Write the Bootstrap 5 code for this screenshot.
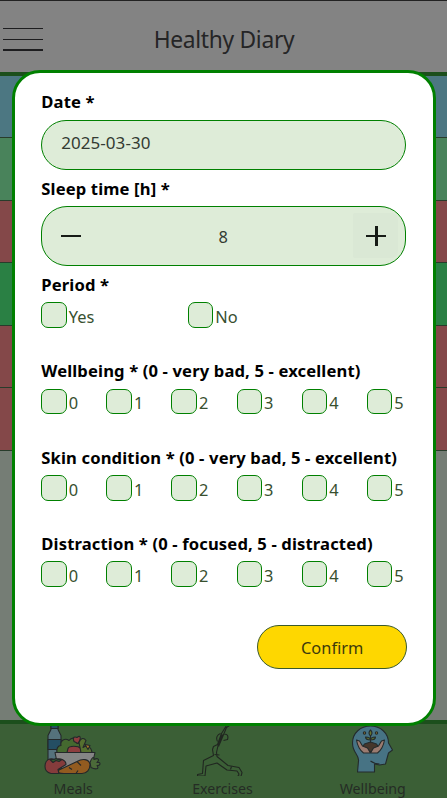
<!DOCTYPE html>
<html lang="en">
<head>
<meta charset="utf-8">
<meta name="viewport" content="width=device-width, initial-scale=1">
<title>Healthy Diary</title>
<link href="https://cdn.jsdelivr.net/npm/bootstrap@5.3.0/dist/css/bootstrap.min.css" rel="stylesheet">
<style>
body{font-family:"Noto Sans","Open Sans",sans-serif;font-size:16.4px;color:#3a4238;background:#757d75;height:798px}
.app{height:798px}
.topbar{height:76px;background:#838383;border-top:1px solid #222;border-bottom:4px solid #1c4f1c}
.burger{width:40px;height:24px;margin:25px 0 0 3px;position:absolute;left:0;top:1px}
.app-title{font-size:22.8px;color:#252526;line-height:1;letter-spacing:-.3px;padding:8px 0 0 1px}
.band{height:62.4px;border-bottom:1px solid #283c2b}
.band-blue{background:#4c7782;height:62px}.band-sage{background:#49835b;height:63px}
.band-red{background:#844849}.band-green{background:#2a8044}
.tabs{height:78px;background:#3b5f36;border-top:4px solid #1c4f1c;color:#252c25;font-size:14.2px}
.tab-item{width:149.5px;line-height:1;gap:5.5px}
.tab-item:first-child{width:147.5px}
.tab-item:nth-child(2){width:153px}
.dialog-layer{left:11.7px;top:69.8px;width:424.8px;height:656px;border:3px solid #008000;border-radius:28px;background:#fff;padding:10.6px 26.3px 0 26.6px}
.field-label{height:36.3px;font-weight:700;color:#000;white-space:nowrap;line-height:1;padding-top:2px;font-size:16.6px;letter-spacing:.14px}
.pill{background:#deecd8;border:1px solid #008000;border-radius:26px;color:#333b32;width:365px}
.date-box{height:50px;padding:0 19px 4px;font-size:17px;letter-spacing:.04px}
.step-box{height:60px;padding:0 7px 0 6px}
.step-box span{padding-top:2px}
.step-btn{width:45px;height:45px;border:0;background:transparent}
.step-btn.hovered{background:#dae8d5;border-radius:2px 7px 7px 2px}
.opt-row{height:25.5px;margin-bottom:24.6px}
.opt{width:65.1px;flex:none;gap:2px;line-height:1;color:#38502f}
.opt-wide .opt{width:146.4px}
.tick{width:25.5px;height:25.5px;border:1px solid #008000;border-radius:7px;background:#deecd8;flex:none}
.opt span{padding-top:6.7px}
.confirm{width:150px;height:43.5px;border:1px solid #3a5a2c;border-radius:22px;background:#fed700;color:#3d3a0c;font-size:16.4px;margin-top:13.9px;padding:2px 0 0}
</style>
<script src="https://cdn.jsdelivr.net/npm/bootstrap@5.3.0/dist/js/bootstrap.bundle.min.js"></script>
</head>
<body class="overflow-hidden">
<div class="app d-flex flex-column">
  <header class="topbar d-flex align-items-center justify-content-center position-relative flex-shrink-0">
    <svg class="burger" viewBox="0 0 40 24"><path d="M0 1.5h40M0 12.5h40" stroke="#1d1d1f"/><path d="M0 23h40" stroke="#1d1d1f" stroke-width="2"/></svg>
    <div class="app-title">Healthy Diary</div>
  </header>
  <main class="flex-grow-1">
    <div class="band band-blue"></div><div class="band band-sage"></div><div class="band band-red"></div>
    <div class="band band-green"></div><div class="band band-red"></div><div class="band band-red"></div>
  </main>
  <nav class="tabs d-flex flex-shrink-0">
    <div class="tab-item d-flex flex-column align-items-center">
      <svg width="58" height="52" viewBox="45 723.5 58 52" stroke="#24282a" stroke-width="1.1" stroke-linejoin="round">
        <path d="M52 724h7v5l3 6v27H49v-27l3-6z" fill="#55727c"/><path d="M49 739h13v10H49zM52 724h7v4h-7z" fill="#244e63"/>
        <path d="M58 753c-1-5 1-8 4-8-1-5 4-8 8-5 4-5 9-1 8 3 5-2 11 1 15 9z" fill="#44692f"/>
        <path d="M75 741c-2-5 1-5 3-4 3-3 5 0 1 6zM69 748c1-3 10-3 13 0v4H68z" fill="#8e3d3f"/>
        <path d="M80 742c2-5 5-5 7-2l-3 7c4-3 8-1 9 5H82z" fill="#56702f"/><path d="M86 744l5 1-2 4z" fill="#a9782a"/>
        <path d="M56 752h40c-1 8-5 14-9 18H65c-6-4-8-11-9-18z" fill="#858585"/>
        <path d="M91 762c2-6 4-6 4-3 4-2 6 0 3 3 4-1 4 3 0 3 3 4-2 4-6 2z" fill="#4b6a39"/>
        <path d="M91 764c-1-6-8-6-13-3l-19 9c-1 3 3 3 6 3h18c5 0 8-4 8-9z" fill="#925b20"/><path d="M70 767l3 2m5-8l4 4m-5 8l2-3" fill="none"/>
        <path d="M46 766c0-7 5-9 10-7 6-2 11 1 11 5l-8 5 1 4h-8c-4-1-6-4-6-7z" fill="#853c3c"/><path d="M51 759l4 0 2-1 2 1 4 0-3 2-3-1-3 2z" fill="#345d2d"/>
      </svg>
      <div>Meals</div>
    </div>
    <div class="tab-item d-flex flex-column align-items-center">
      <svg width="58" height="52" viewBox="194.5 724.5 58 52" fill="none" stroke="#202620" stroke-width="1.1" stroke-linejoin="round">
        <path d="M230 726l-3 2-5 12-3 7M227 726l-5 8-4 11-4 2-1 3 1 6-10 5-1 13-5 1v1.500h7.500l1-10 11-3 10 7 10 1 2 3-1 2 3 .5 1-4-3-5-11-2-11-9-.5-4 2-9 4-9"/>
        <path d="M218 742c-2-4 0-7 3-8m4 1c3-1 4 2 3 5l-4 1M215 755l5 .5M232 767l-1 3"/>
      </svg>
      <div>Exercises</div>
    </div>
    <div class="tab-item d-flex flex-column align-items-center">
      <svg width="44" height="52" viewBox="350.5 724 44 52" stroke="#242b2c" stroke-width="1.1" stroke-linejoin="round">
        <path d="M357 772l1-11c1-6-6-8-6-18 0-10 8-17 18-17s18 7 18 17l4 7-4 3-3 11-6 1-5-1v8z" fill="#477384"/>
        <path d="M370 761c4 3 6 3 9 3" fill="none"/>
        <path d="M364 744l6-2 6 2 2 3-8 5-8-5z" fill="#46372b"/>
        <path d="M356 740l3 1 3 5 5 2 3 5h-7c-4-3-6-7-7-13zM384 740l-3 1-3 5-5 2-3 5h7c4-3 6-7 7-13z" fill="#9b7b70"/>
        <path d="M370 743v-12m0 9c-3 0-5-1-5-3 3 0 5 1 5 3 0-2 2-3 5-3 0 2-2 3-5 3z" fill="#596d2d"/>
        <path d="M370 730c-2 2-2 4 0 6 2-2 2-4 0-6z" fill="#68752d"/><circle cx="364" cy="733" r="1.2" fill="#8b702e"/><circle cx="376" cy="733" r="1.2" fill="#8b702e"/>
      </svg>
      <div>Wellbeing</div>
    </div>
  </nav>
</div>

<form class="dialog-layer position-absolute">
  <label class="field-label d-flex align-items-center">Date *</label>
  <div class="pill date-box d-flex align-items-center">2025-03-30</div>
  <label class="field-label d-flex align-items-center">Sleep time [h] *</label>
  <div class="pill step-box d-flex align-items-center justify-content-between">
    <button type="button" class="step-btn p-0 d-flex align-items-center justify-content-center" aria-label="Decrease"><svg width="20" height="20"><path d="M0 10h20" stroke="#161b16" stroke-width="2"/></svg></button>
    <span>8</span>
    <button type="button" class="step-btn hovered p-0 d-flex align-items-center justify-content-center" aria-label="Increase"><svg width="20" height="20"><path d="M0 10h20" stroke="#161b16" stroke-width="2"/><path d="M10.5 0v20" stroke="#161b16" stroke-width="3"/></svg></button>
  </div>
  <label class="field-label d-flex align-items-center">Period *</label>
  <div class="opt-row opt-wide d-flex">
    <div class="opt d-flex"><i class="tick"></i><span>Yes</span></div><div class="opt d-flex"><i class="tick"></i><span>No</span></div>
  </div>
  <label class="field-label d-flex align-items-center">Wellbeing * (0 - very bad, 5 - excellent)</label>
  <div class="opt-row d-flex">
    <div class="opt d-flex"><i class="tick"></i><span>0</span></div><div class="opt d-flex"><i class="tick"></i><span>1</span></div><div class="opt d-flex"><i class="tick"></i><span>2</span></div><div class="opt d-flex"><i class="tick"></i><span>3</span></div><div class="opt d-flex"><i class="tick"></i><span>4</span></div><div class="opt d-flex"><i class="tick"></i><span>5</span></div>
  </div>
  <label class="field-label d-flex align-items-center">Skin condition * (0 - very bad, 5 - excellent)</label>
  <div class="opt-row d-flex">
    <div class="opt d-flex"><i class="tick"></i><span>0</span></div><div class="opt d-flex"><i class="tick"></i><span>1</span></div><div class="opt d-flex"><i class="tick"></i><span>2</span></div><div class="opt d-flex"><i class="tick"></i><span>3</span></div><div class="opt d-flex"><i class="tick"></i><span>4</span></div><div class="opt d-flex"><i class="tick"></i><span>5</span></div>
  </div>
  <label class="field-label d-flex align-items-center">Distraction * (0 - focused, 5 - distracted)</label>
  <div class="opt-row d-flex">
    <div class="opt d-flex"><i class="tick"></i><span>0</span></div><div class="opt d-flex"><i class="tick"></i><span>1</span></div><div class="opt d-flex"><i class="tick"></i><span>2</span></div><div class="opt d-flex"><i class="tick"></i><span>3</span></div><div class="opt d-flex"><i class="tick"></i><span>4</span></div><div class="opt d-flex"><i class="tick"></i><span>5</span></div>
  </div>
  <div class="d-flex justify-content-end"><button type="button" class="confirm">Confirm</button></div>
</form>
</body>
</html>
